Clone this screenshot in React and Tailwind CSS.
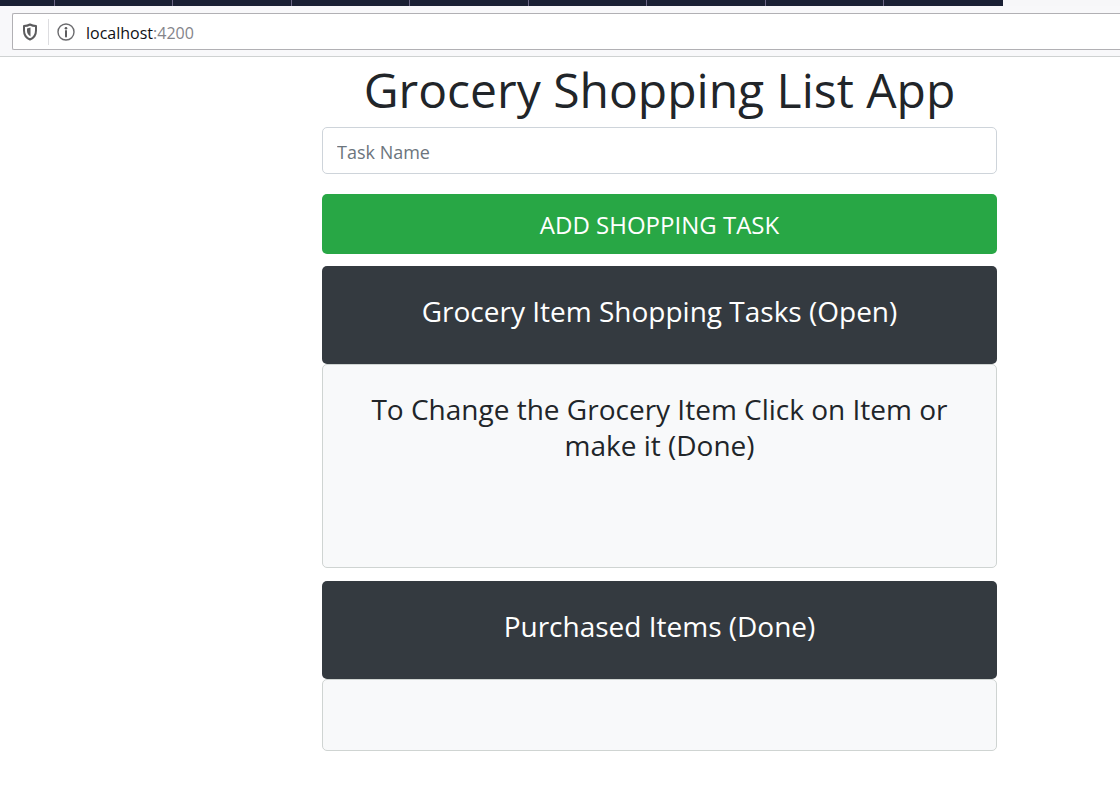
import React, { useState } from "react";

const TABS = [
  "w-[54px]",
  "w-[118px]",
  "w-[119px]",
  "w-[118px]",
  "w-[119px]",
  "w-[118px]",
  "w-[119px]",
  "w-[118px]",
  "w-[120px]",
];

function ShieldIcon() {
  return (
    <svg viewBox="0 0 16 18" className="h-[18px] w-4 shrink-0" fill="none" aria-hidden="true">
      <path
        d="M8 1.500C6 2.600 4 3 2 3.100v4.400c0 4.300 2.200 7.500 6 9 3.800-1.500 6-4.700 6-9V3.100C12 3 10 2.600 8 1.500Z"
        stroke="#5c5c5e"
        strokeWidth="2"
        strokeLinejoin="round"
      />
      <path d="M8.500 4.600v8.800C6.200 12.200 5 10.200 5 8V5.500C6.300 5.300 7.400 5 8.500 4.600Z" fill="#5c5c5e" />
    </svg>
  );
}

function InfoIcon() {
  return (
    <svg viewBox="0 0 18 18" className="size-[18px] shrink-0" fill="none" aria-hidden="true">
      <circle cx="9" cy="9" r="8" stroke="#6b6b6e" strokeWidth="1.400" />
      <circle cx="9" cy="5.200" r="1.300" fill="#5c5c5e" />
      <path d="M9 8v5.500" stroke="#5c5c5e" strokeWidth="2" strokeLinecap="round" />
    </svg>
  );
}

function Browser() {
  return (
    <header>
      <div className="flex h-1.5 bg-[#f7f7f9]">
        {TABS.map((tab, i) => (
          <div
            key={i}
            className={`${tab} shrink-0 border-l border-[#6b6685] bg-[#1a2034] first:border-l-0`}
          />
        ))}
      </div>
      <div className="border-b border-[#cfd2d2] bg-[#f8f8fa] pt-[7px] pb-1.5 pl-3">
        <div className="flex h-[37px] items-center rounded-l-xs border border-r-0 border-[#b1b0b4] bg-white pl-[9px]">
          <ShieldIcon />
          <span className="ml-[10px] h-[26px] w-px bg-[#dddde0]" />
          <span className="ml-2 flex">
            <InfoIcon />
          </span>
          <span className="ml-[11px] pt-0.5 text-base text-[#84848a]">
            <span className="text-[#101014]">localhost</span>:4200
          </span>
        </div>
      </div>
    </header>
  );
}

function Banner({ children }) {
  return (
    <div className="rounded-[5px] bg-[#343a40] px-6 pt-[27px] pb-[35px]">
      <h2 className="text-[28px] leading-9 text-white">{children}</h2>
    </div>
  );
}

function Panel({ children, className }) {
  return (
    <div className={`rounded-[5px] border border-[#cfd4d2] bg-[#f8f9fa] px-6 ${className}`}>
      {children}
    </div>
  );
}

export default function App() {
  const [name, setName] = useState("");
  return (
    <div className="min-h-screen bg-white font-['Open_Sans','Noto_Sans',sans-serif] text-[#212529]">
      <Browser />
      <main className="mr-[123px] ml-[322px] pt-[3px] text-center">
        <h1 className="text-5xl leading-[60px]">Grocery Shopping List App</h1>
        <form className="mt-[7px] mb-3" onSubmit={(e) => e.preventDefault()}>
          <input
            type="text"
            aria-label="Task Name"
            placeholder="Task Name"
            value={name}
            onChange={(e) => setName(e.target.value)}
            className="block h-[47px] w-full rounded-[5px] border border-[#ced4da] bg-white px-3.5 pt-0.5 text-lg placeholder:text-[#6c757d]"
          />
          <button
            type="submit"
            className="mt-5 block h-[60px] w-full rounded-[5px] bg-[#28a745] pt-0.5 text-2xl text-white"
          >
            ADD SHOPPING TASK
          </button>
        </form>
        <section className="mb-[13px]">
          <Banner>Grocery Item Shopping Tasks (Open)</Banner>
          <Panel className="pt-[26px] pb-[104px]">
            <h3 className="text-[28px] leading-9">
              To Change the Grocery Item Click on Item or make it (Done)
            </h3>
          </Panel>
        </section>
        <section>
          <Banner>Purchased Items (Done)</Banner>
          <Panel className="py-[35px]" />
        </section>
      </main>
    </div>
  );
}
